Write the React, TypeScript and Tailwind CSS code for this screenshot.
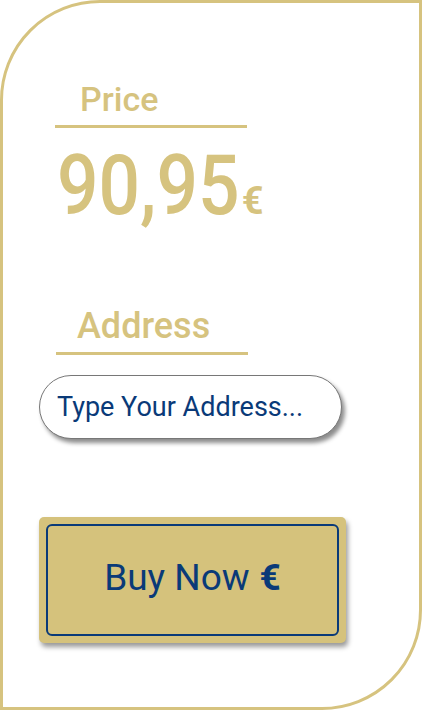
import React from "react";

export default function App() {
  return (
    <div className="w-[422px] h-[710px] bg-white overflow-hidden" style={{ fontFamily: 'Roboto, "DejaVu Sans", sans-serif' }}>
      <div className="w-[422px] h-[710px] border-[3px] border-[#d6c37f] rounded-tl-[100px] rounded-br-[100px] flex flex-col pl-[52px]">
        <div className="mt-[78px] w-[192px] border-b-[3px] border-[#d6c37f] pl-[25px] pb-[8px] text-[34px] leading-[36px] font-medium text-[#d6c37f]">
          Price
        </div>
        <div className="mt-[18px] flex items-baseline pl-[2px] text-[#d6c37f] font-medium">
          <span className="inline-block origin-left scale-x-[0.87] mr-[-26px] text-[84px] leading-[80px]">90,95</span>
          <span className="text-[38px] font-bold ml-[1px]">€</span>
        </div>
        <div className="mt-[78px] w-[192px] ml-[1px] border-b-[3px] border-[#d6c37f] pl-[21px] pb-[8px] text-[36px] leading-[36px] font-medium text-[#d6c37f]">
          Address
        </div>
        <div className="mt-[20px] -ml-[16px] w-[303px] h-[64px] rounded-full border border-[#777] bg-white shadow-[3px_4px_4px_rgba(0,0,0,0.45)] flex items-center pl-[17px] text-[27px] text-[#0a3a78]">
          Type Your Address...
        </div>
        <div className="mt-[78px] -ml-[16px] w-[307px] h-[126px] rounded-[5px] bg-[#d5c27c] shadow-[2px_4px_5px_rgba(0,0,0,0.4)] p-[7px]">
          <div className="w-full h-full rounded-[6px] border-2 border-[#0a3a78] flex items-center justify-center text-[37px] text-[#0a3a78] pb-[4px]">
            Buy Now <span className="font-bold ml-[10px]">€</span>
          </div>
        </div>
      </div>
    </div>
  );
}
